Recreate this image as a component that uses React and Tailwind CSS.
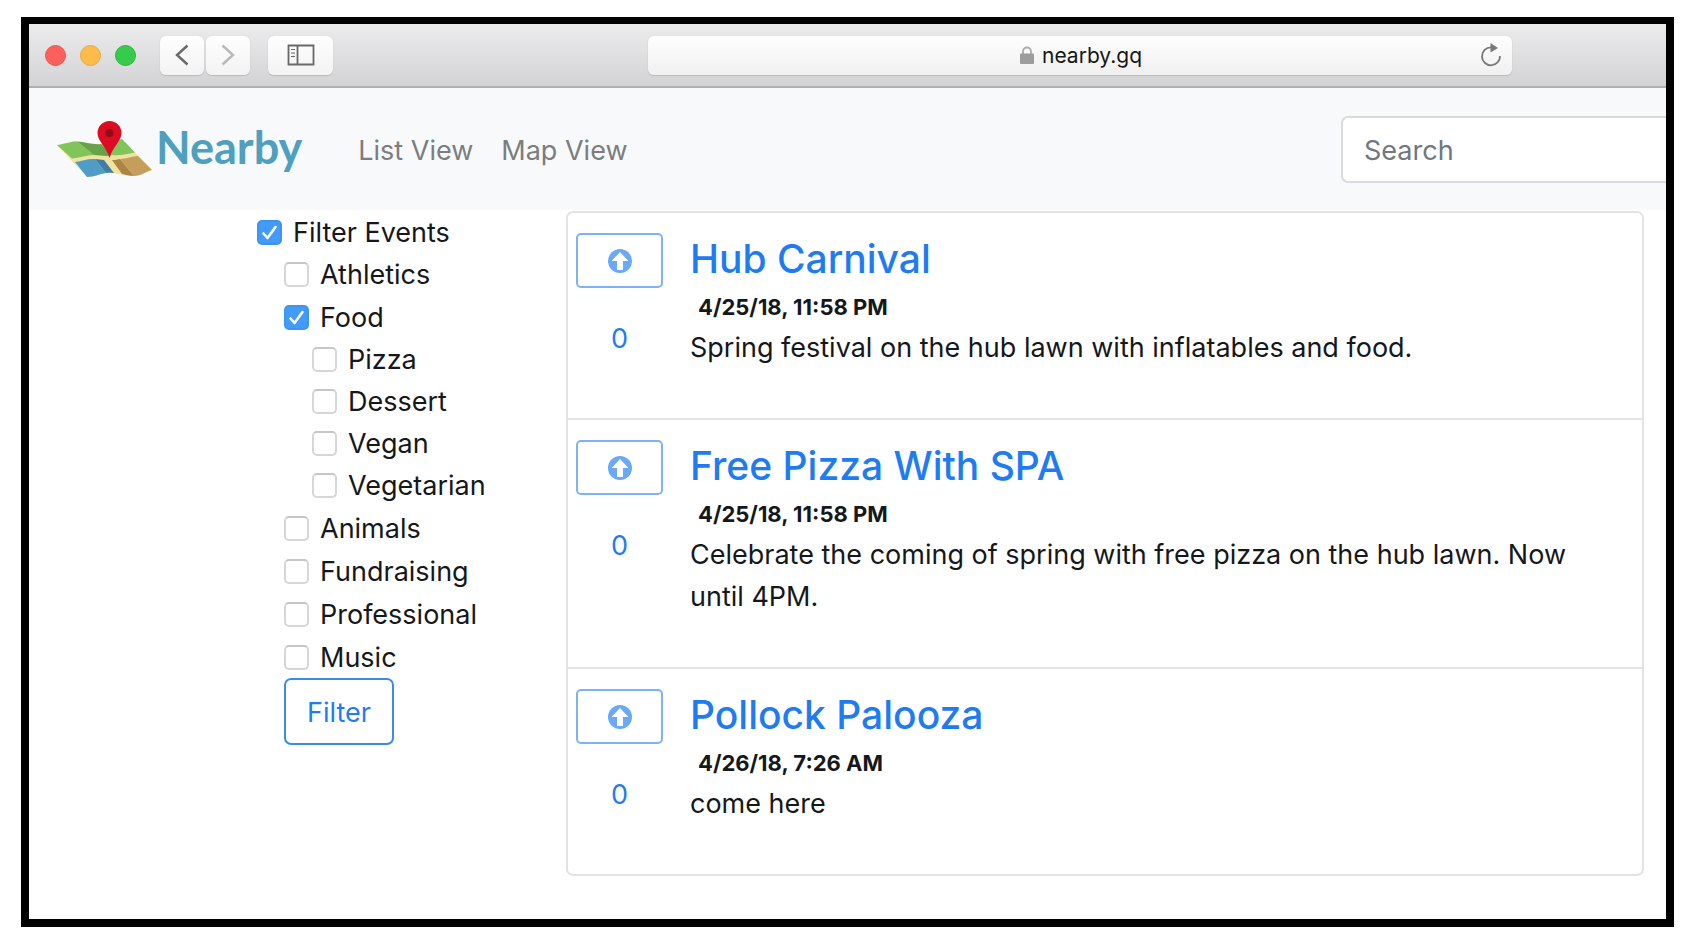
import { useState } from "react";

const events = [
  {
    title: "Hub Carnival",
    date: "4/25/18, 11:58 PM",
    text: "Spring festival on the hub lawn with inflatables and food.",
  },
  {
    title: "Free Pizza With SPA",
    date: "4/25/18, 11:58 PM",
    text: "Celebrate the coming of spring with free pizza on the hub lawn. Now until 4PM.",
  },
  { title: "Pollock Palooza", date: "4/26/18, 7:26 AM", text: "come here" },
];

const filters = [
  { name: "Athletics" },
  {
    name: "Food",
    checked: true,
    children: [{ name: "Pizza" }, { name: "Dessert" }, { name: "Vegan" }, { name: "Vegetarian" }],
  },
  { name: "Animals" },
  { name: "Fundraising" },
  { name: "Professional" },
  { name: "Music" },
];

function Check({ label, initial = false }) {
  const [on, setOn] = useState(initial);
  return (
    <label className="flex h-[42px] items-center gap-[11px]">
      <span className="grid size-[25px] shrink-0 place-items-center">
        <input
          type="checkbox"
          checked={on}
          onChange={() => setOn(!on)}
          className="col-start-1 row-start-1 size-[25px] appearance-none rounded-[5px] border-2 border-[#d6d6d6] border-t-[#c6c6c6] bg-white checked:border-[#3d95f0] checked:bg-[#429bf8]"
        />
        {on && (
          <svg viewBox="0 0 25 25" className="pointer-events-none col-start-1 row-start-1 size-[25px]" fill="none" stroke="#fff" strokeWidth="2.6" strokeLinecap="round" strokeLinejoin="round">
            <path d="M6.5 13.5 10.5 18 18.5 7" />
          </svg>
        )}
      </span>
      <span className="pt-0.5">{label}</span>
    </label>
  );
}

function Toolbar() {
  const button =
    "flex h-[39px] items-center justify-center rounded-md bg-linear-to-b from-[#fefefe] to-[#f3f3f3] shadow-[0_1px_1px_#b9b9b9,0_0_1px_#c9c9c9]";
  return (
    <div className="flex h-16 items-center border-b-2 border-[#b0b0b2] bg-linear-to-b from-[#ececed] to-[#d3d3d5] pl-4">
      <div className="flex gap-3.5">
        <span className="size-[21px] rounded-full border border-[#e9544f] bg-[#fb605d]" />
        <span className="size-[21px] rounded-full border border-[#e5aa3e] bg-[#fdbc4a]" />
        <span className="size-[21px] rounded-full border border-[#2bb140] bg-[#37cb4c]" />
      </div>
      <div className="ml-6 flex gap-[2px]">
        <button aria-label="Back" className={`${button} w-11`}>
          <svg viewBox="0 0 14 22" className="h-[22px] w-[14px]" fill="none" stroke="#686868" strokeWidth="2.4">
            <path d="M12.500 1.500 2 11l10.500 9.500" />
          </svg>
        </button>
        <button aria-label="Forward" className={`${button} w-11`}>
          <svg viewBox="0 0 14 22" className="h-[22px] w-[14px]" fill="none" stroke="#b8b8b8" strokeWidth="2.4">
            <path d="M1.500 1.500 12 11 1.500 20.500" />
          </svg>
        </button>
      </div>
      <button aria-label="Show sidebar" className={`${button} ml-[18px] w-[65px]`}>
        <svg viewBox="0 0 28 22" className="h-[22px] w-7" fill="none" stroke="#686868" strokeWidth="1.800">
          <path d="M1.500 1.500h25v19h-25zM10.500 1.500v19" />
          <path d="M4 5.500h4M4 9h4M4 12.500h4" strokeWidth="1.200" />
        </svg>
      </button>
      <div className="mr-[154px] ml-[315px] flex h-[39px] flex-1 items-center rounded-md bg-linear-to-b from-[#fefefe] to-[#f0f0f0] shadow-[0_1px_1px_#b9b9b9,0_0_1px_#c9c9c9]">
        <div className="flex flex-1 items-center justify-center gap-2 pl-[34px] text-[21px] text-[#161616]">
          <svg viewBox="0 0 14 18" className="h-[18px] w-[14px]">
            <path d="M3 9V5.500a4 4 0 0 1 8 0V9" fill="none" stroke="#ababab" strokeWidth="1.800" />
            <rect y="7.500" width="14" height="10.500" rx="1" fill="#9d9d9d" />
          </svg>
          <span className="pt-0.5">nearby.gq</span>
        </div>
        <button aria-label="Reload" className="mr-2.5">
          <svg viewBox="0 0 22 25" className="h-[25px] w-[22px]">
            <path d="M11 4.300A9 9 0 1 0 20 13" fill="none" stroke="#787878" strokeWidth="1.800" />
            <path d="M10.500 0 18 5l-7.500 4.500z" fill="#787878" />
          </svg>
        </button>
      </div>
    </div>
  );
}

function Logo() {
  return (
    <svg viewBox="0 0 95 56" className="h-14 w-[95px]">
      <path d="M0 24C8 23 14 20 20 20.500S36 24 44 23 58 20 65 18L95 49C88 51 82 55 76 55S60 52 52 52 38 56 30 56z" fill="#eee3a0" />
      <path d="M0 24C8 23 14 20 20 20.500L37 34C30 34 22 37 15 37.500z" fill="#80c45a" />
      <path d="M20 20.500C28 21 36 24 44 23L55 34C49 36 43 34 37 34z" fill="#68a34a" />
      <path d="M44 23C51 22 58 20 65 18L78 31.500C70 33 62 35 55 34z" fill="#80c45a" />
      <path d="M18 41C25 40 31 37.500 38 38L49 52C42 53 37 56 30 56z" fill="#4f9cc7" />
      <path d="M38 38C41 38 44 39 47 39L57 52C54 51.500 52 51.500 49 52z" fill="#3f7fa6" />
      <path d="M55 39C58 39 61 38.500 63 38L77 55C72 55 68 53.500 65 53z" fill="#ac8545" />
      <path d="M63 38C69 37.500 76 35.500 81 35L95 49C88 51 84 55 77 55z" fill="#c69e5b" />
      <path d="M52.500 37C50 27 40.500 20 40.500 12a12 12 0 0 1 24 0c0 8-9.500 15-12 25z" fill="#dc0d22" />
      <circle cx="52.500" cy="12" r="4" fill="#910c17" />
    </svg>
  );
}

function Event({ title, date, text }) {
  return (
    <li className="flex gap-[27px] pt-5 pr-16 pb-[49px] pl-2">
      <div className="flex w-[87px] shrink-0 flex-col items-center gap-[30px] text-[#1f7cf0]">
        <button aria-label={`Upvote ${title}`} className="flex h-[55px] w-full items-center justify-center rounded-[5px] border-2 border-[#7db3f6]">
          <svg viewBox="0 0 24 24" className="size-6">
            <circle cx="12" cy="12" r="12" fill="#69a9f6" />
            <path d="M12 3 20.500 12H15v9H9V12H3.500z" fill="#fff" />
          </svg>
        </button>
        <span className="leading-[42px]">0</span>
      </div>
      <div>
        <h4 className="text-[39px] leading-[52px] font-medium text-[#1f7cf0]">{title}</h4>
        <p className="pt-2 pb-1.5 pl-2 text-[22px] leading-7 font-bold">{date}</p>
        <p className="leading-[42px]">{text}</p>
      </div>
    </li>
  );
}

export default function App() {
  return (
    <div className="min-h-screen bg-white pt-[17px] pr-[26px] pb-[19px] pl-[21px] font-['Inter',sans-serif] text-[27px] text-[#15181b]">
      <div className="overflow-hidden border-8 border-t-[7px] border-black bg-white">
        <Toolbar />
        <nav className="flex h-[122px] items-center bg-[#f7f9fb] pl-7">
          <a href="#home" className="flex items-center gap-1">
            <Logo />
            <span className="pb-1 font-['Lato',sans-serif] text-[45px] leading-[56px] font-bold text-[#4f9fbf]">Nearby</span>
          </a>
          <div className="ml-14 flex gap-7 pt-1 text-[#7b7d7e]">
            <a href="#list">List View</a>
            <a href="#map">Map View</a>
          </div>
          <input
            type="search"
            aria-label="Search"
            placeholder="Search"
            className="ml-auto h-[67px] w-[325px] rounded-l-[7px] border-2 border-r-0 border-[#d8dce0] bg-white pt-0.5 pl-[21px] placeholder:text-[#70777e]"
          />
        </nav>
        <main className="flex items-start pt-px pr-[22px] pb-[43px] pl-[228px]">
          <form className="w-[309px] shrink-0" onSubmit={(e) => e.preventDefault()}>
            <Check label="Filter Events" initial />
            <ul className="flex flex-col gap-px pl-[27px]">
              {filters.map((f) => (
                <li key={f.name}>
                  <Check label={f.name} initial={f.checked} />
                  {f.children && (
                    <ul className="pl-7">
                      {f.children.map((c) => (
                        <li key={c.name}>
                          <Check label={c.name} />
                        </li>
                      ))}
                    </ul>
                  )}
                </li>
              ))}
            </ul>
            <button className="ml-[27px] h-[67px] w-[110px] rounded-[7px] border-2 border-[#3b8bee] pt-1 text-[#1f7cf0]">Filter</button>
          </form>
          <ul className="flex-1 divide-y-2 divide-[#e2e3e4] rounded-[7px] border-2 border-[#e2e3e4]">
            {events.map((e) => (
              <Event key={e.title} {...e} />
            ))}
          </ul>
        </main>
      </div>
    </div>
  );
}
